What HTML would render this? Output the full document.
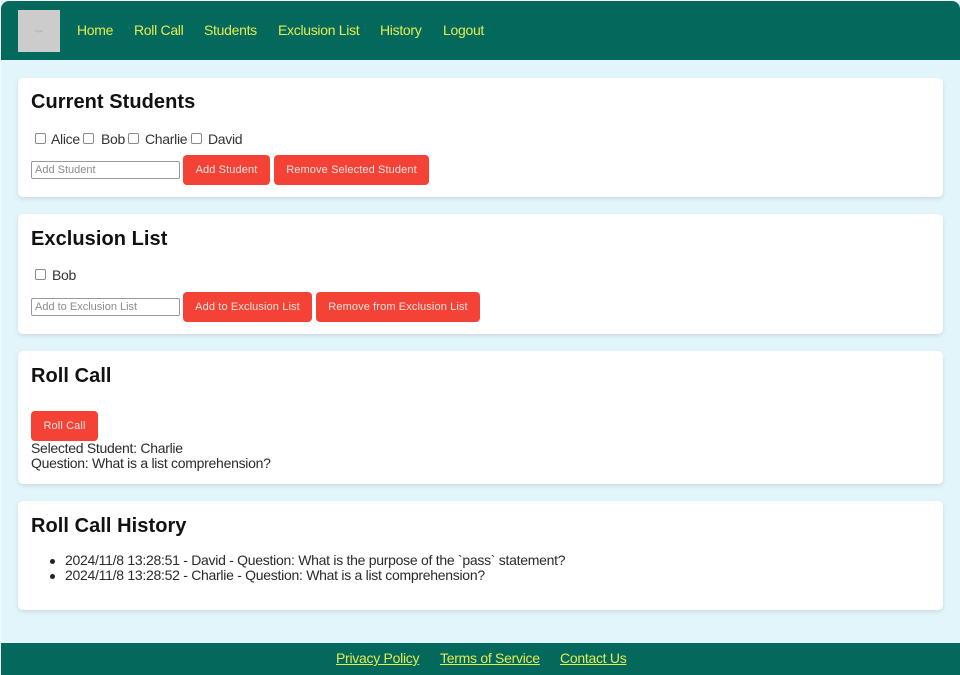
<!DOCTYPE html>
<html lang="en">
<head>
<meta charset="utf-8">
<title>Roll Call</title>
<style>
html,body{margin:0;padding:0;background:#e1f5fb}
#p{width:960px;height:675px;position:relative;overflow:hidden;background:#e1f5fb;font-family:"Liberation Sans",Arial,sans-serif;color:#222;filter:blur(.35px)}
.a{position:absolute;white-space:nowrap}
#edge{left:0;top:0;width:1px;height:675px;background:#f4fbfc}
#top{left:0;top:0;width:960px;height:1px;background:#f4fbfc}
header{position:absolute;left:1px;top:1px;width:959px;height:59px;background:#03695c;border-radius:8px 8px 0 0}
#logo{left:18px;top:10px;width:42px;height:42px;background:#ccc;color:#aaa;font-size:4px;line-height:42px;text-align:center}
.nav{top:22px;font-size:14px;line-height:17px;color:#e4ec50;text-decoration:none;letter-spacing:-.3px}
.card{position:absolute;left:18px;width:925px;background:#fff;border-radius:5px;box-shadow:0 2px 5px rgba(0,0,0,.1)}
h2{position:absolute;left:31px;margin:0;font-size:20px;line-height:23px;font-weight:bold;color:#111;white-space:nowrap;letter-spacing:.06px}
.cb{position:absolute;box-sizing:border-box;width:11px;height:11px;border:1px solid #8a8a8a;border-radius:2px;background:#fff}
.lb{position:absolute;font-size:14px;line-height:16px;color:#333;white-space:nowrap;letter-spacing:-.3px}
.in{position:absolute;box-sizing:border-box;left:31px;width:149px;height:18px;border:1px solid #999;border-radius:2px;background:#fff;color:#8c8c8c;font-size:11px;line-height:16px;padding-left:3px;white-space:nowrap}
.btn{position:absolute;box-sizing:border-box;height:30px;background:#f44336;color:#fde3df;border-radius:4px;font-size:11px;line-height:30px;text-align:center;white-space:nowrap;letter-spacing:.12px}
.tx{position:absolute;font-size:14px;line-height:15px;color:#2a2a2a;white-space:nowrap;letter-spacing:-.28px}
.dot{position:absolute;left:50px;width:5px;height:5px;border-radius:50%;background:#222}
footer{position:absolute;left:1px;top:643px;width:959px;height:32px;background:#03695c}
.fl{top:650px;font-size:14px;line-height:16px;color:#e4ec50;text-decoration:underline;letter-spacing:-.28px}
</style>
</head>
<body>
<div id="p">
<div class="a" id="edge"></div>
<div class="a" id="top"></div>
<header></header>
<div class="a" id="logo">logo</div>
<a class="a nav" style="left:77px">Home</a>
<a class="a nav" style="left:134px">Roll Call</a>
<a class="a nav" style="left:204px">Students</a>
<a class="a nav" style="left:278px">Exclusion List</a>
<a class="a nav" style="left:380px">History</a>
<a class="a nav" style="left:443px">Logout</a>

<div class="card" style="top:78px;height:119px"></div>
<h2 style="top:91px">Current Students</h2>
<div class="cb" style="left:35px;top:133px"></div><div class="lb" style="left:51px;top:131px">Alice</div>
<div class="cb" style="left:83px;top:133px"></div><div class="lb" style="left:101px;top:131px">Bob</div>
<div class="cb" style="left:128px;top:133px"></div><div class="lb" style="left:145px;top:131px">Charlie</div>
<div class="cb" style="left:191px;top:133px"></div><div class="lb" style="left:208px;top:131px">David</div>
<div class="in" style="top:161px">Add Student</div>
<div class="btn" style="left:183px;top:155px;width:87px">Add Student</div>
<div class="btn" style="left:274px;top:155px;width:155px">Remove Selected Student</div>

<div class="card" style="top:214px;height:120px"></div>
<h2 style="top:228px">Exclusion List</h2>
<div class="cb" style="left:35px;top:269px"></div><div class="lb" style="left:52px;top:267px">Bob</div>
<div class="in" style="top:298px">Add to Exclusion List</div>
<div class="btn" style="left:183px;top:292px;width:129px">Add to Exclusion List</div>
<div class="btn" style="left:316px;top:292px;width:164px">Remove from Exclusion List</div>

<div class="card" style="top:351px;height:133px"></div>
<h2 style="top:365px">Roll Call</h2>
<div class="btn" style="left:31px;top:411px;width:67px">Roll Call</div>
<div class="tx" style="left:31px;top:441px">Selected Student: Charlie</div>
<div class="tx" style="left:31px;top:456px">Question: What is a list comprehension?</div>

<div class="card" style="top:501px;height:109px"></div>
<h2 style="top:515px">Roll Call History</h2>
<div class="dot" style="top:559px"></div>
<div class="tx" style="left:65px;top:553px">2024/11/8 13:28:51 - David - Question: What is the purpose of the `pass` statement?</div>
<div class="dot" style="top:574px"></div>
<div class="tx" style="left:65px;top:568px">2024/11/8 13:28:52 - Charlie - Question: What is a list comprehension?</div>

<footer></footer>
<a class="a fl" style="left:336px">Privacy Policy</a>
<a class="a fl" style="left:440px">Terms of Service</a>
<a class="a fl" style="left:560px">Contact Us</a>
</div>
</body>
</html>
